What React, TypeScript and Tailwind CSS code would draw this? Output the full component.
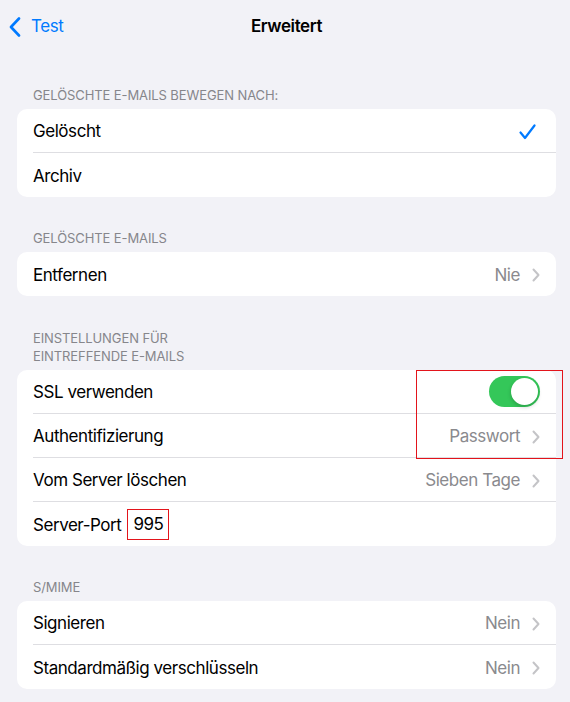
import React from "react";

const font = { fontFamily: "Inter, 'Noto Sans', sans-serif" };

function Chevron() {
  return (
    <svg width="8" height="14" viewBox="0 0 8 14" fill="none" className="mt-[2px] shrink-0">
      <path d="M1.5 1.5 L6.5 7 L1.5 12.5" stroke="#c4c4c7" strokeWidth="2" strokeLinecap="round" strokeLinejoin="round" />
    </svg>
  );
}

function Row({
  label,
  value,
  chevron,
  last,
  right,
}: {
  label: React.ReactNode;
  value?: string;
  chevron?: boolean;
  last?: boolean;
  right?: React.ReactNode;
}) {
  return (
    <div className="flex h-[44px] pl-4">
      <div
        className={
          "flex flex-1 items-center pr-4 " + (last ? "" : "border-b border-[#dedee2]")
        }
      >
        <div className="flex flex-1 items-center pt-[3px] text-[17px] tracking-[-0.45px] text-black">{label}</div>
        {value && <span className="mr-[12px] pt-[3px] text-[17px] tracking-[-0.45px] text-[#8a8a8e]">{value}</span>}
        {chevron && <Chevron />}
        {right}
      </div>
    </div>
  );
}

function Header({ children }: { children: React.ReactNode }) {
  return (
    <div className="px-4 pb-[5px] text-[13px] leading-[18px] tracking-[-0.1px] text-[#86868b] uppercase">
      {children}
    </div>
  );
}

function Card({ children, className = "" }: { children: React.ReactNode; className?: string }) {
  return <div className={"relative rounded-[10px] bg-white " + className}>{children}</div>;
}

export default function App() {
  return (
    <div className="min-h-[702px] bg-[#f2f2f7] pl-[17px] pr-[14px]" style={font}>
      <div className="relative flex h-[50px] items-center pt-[4px]">
        <div className="-ml-[8px] flex items-center gap-[10px] text-[#007aff]">
          <svg width="12" height="20" viewBox="0 0 12 20" fill="none">
            <path d="M10 1.5 L2 10 L10 18.5" stroke="#007aff" strokeWidth="2.6" strokeLinecap="round" strokeLinejoin="round" />
          </svg>
          <span className="text-[17px] tracking-[-0.4px]">Test</span>
        </div>
        <div className="absolute inset-x-0 text-center text-[17px] font-semibold tracking-[-0.4px] text-black">
          Erweitert
        </div>
      </div>

      <div className="pt-[36px]">
        <Header>Gelöschte E-Mails bewegen nach:</Header>
        <Card>
          <Row
            label="Gelöscht"
            right={
              <svg width="17" height="16" viewBox="0 0 17 16" fill="none" className="mr-[4px] mt-[2px]">
                <path d="M1.5 8.5 L6 14 L15.5 1.5" stroke="#007aff" strokeWidth="2.2" strokeLinecap="round" strokeLinejoin="round" />
              </svg>
            }
          />
          <Row label="Archiv" last />
        </Card>
      </div>

      <div className="pt-[32px]">
        <Header>Gelöschte E-Mails</Header>
        <Card>
          <Row label="Entfernen" value="Nie" chevron last />
        </Card>
      </div>

      <div className="pt-[33px]">
        <Header>
          Einstellungen für
          <br />
          eintreffende E-Mails
        </Header>
        <Card>
          <Row
            label="SSL verwenden"
            right={
              <div className="flex h-[31px] w-[51px] items-center justify-end rounded-full bg-[#34c759] p-[2px]">
                <div className="h-[27px] w-[27px] rounded-full bg-white shadow-[0_2px_4px_rgba(0,0,0,0.2)]" />
              </div>
            }
          />
          <Row label="Authentifizierung" value="Passwort" chevron />
          <Row label="Vom Server löschen" value="Sieben Tage" chevron />
          <Row
            label={
              <>
                <span>Server-Port</span>
                <span className="-mt-[3px] ml-[6px] flex h-[31px] items-center border-[1.5px] border-[#e3141b] px-[5px] pt-[2px]">995</span>
              </>
            }
            last
          />
          <div className="absolute left-[399px] top-0 h-[89px] w-[147px] border-[1.5px] border-[#e3141b]" />
        </Card>
      </div>

      <div className="pt-[32px]">
        <Header>S/MIME</Header>
        <Card>
          <Row label="Signieren" value="Nein" chevron />
          <Row label="Standardmäßig verschlüsseln" value="Nein" chevron last />
        </Card>
      </div>
    </div>
  );
}
